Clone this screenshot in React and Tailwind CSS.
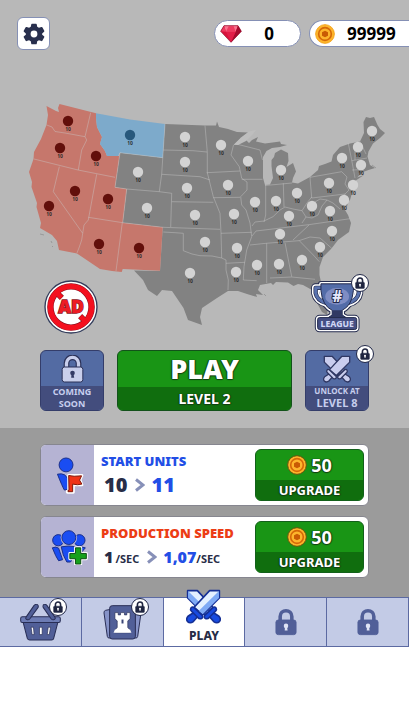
import React from "react";

const mainland =
  "M165 124L205 125.5L216 125.5L217 121.5L219 127L228 129L237 132L248 132.5L241 138L233.5 145L238 144.5L246 140L249 143L252 140L258 137L256 141.5L265 143.5L280 141.5L281 144L287 145L280 147L272 148L266.5 151L263 157L263 178L265 185L270 184.5L273 178L271.5 166L271.5 160L274 157L275 153L281 149.5L288 153L288.5 161L286.5 167L293 163L296 171.5L293 178L292 182.5L298 183.5L310 177L318 170L319 166L325 164L331.5 161.5L333 155L340 147L350 143.5L360 141.5L364 133L363.5 122L366 117L370 118L374 117L377.5 125L380 129L385 133L380 138L373 143.5L368.5 151.5L367.5 156.5L370 165L375 168L368.5 170L363 172L357 177.5L364 175L355 181L355 187L352 193L350 200L348 202L347 207L344 203L345 210L348 215L351 223L349 232L338 240L331.5 248.5L323 257L319.5 267L319.5 275L322 287L328 306L327 315L322 312L317 303L315 296L312 290L303 285L298 284L293.5 286L288 282.5L276 282L273 285L271 283L260 285L258 290L263 295L256 294L257 297L247 294L238 291L228 291L217 298L202 308L200 317L202 325L188 320L183.5 308L172 291L162 290L157 296L148 290L143 280L134 270.5L160 271L162.7 227.3L122.7 222.7L126.7 189L115 187.3L120 152.7L162.7 157.7Z";

const west =
  "M46.5 106L56 111L59 112L58 108L59.5 104L96 113.3L96 118L97 127L102 137L100 144L105 151L107 156L118.5 156L120 152.7L115 187.3L126.7 189L122.7 222.7L162.7 227.3L160 270.7L122.7 269L121.7 272L112 271L100 269L77 253.5L59 250L57 241L52 235L40 228L41 223L36.5 207L37 203L31.5 187L32 182L29 172L33.5 159L34 152L41 139L46.5 125L48 115Z";

const montana =
  "M96 113.3L130 119.5L165 124L162.7 157.7L120 152.7L118.5 156L107 156L105 151L100 144L102 137L97 127L96 118Z";

const borders =
  "M46.7 125L52 127L55 131.5L65 133L85 136.7M34 159L78 170L115 177.3M59.3 166.7L53.3 191.7L82.7 233.3L81.7 240L79.3 247L77 253M90.7 112.7L85 136.7L86.7 140L81.7 150L78.3 170M96.7 174.3L88.3 220L84 225L82.7 233.3M88.3 217.3L122.7 222.7M122.3 222.7L116 271M118.5 156L120 152.7L115 187.3L126.7 189L122.7 222.7L163 227.3L220 229.3M120 152.7L162.7 157.7M165 124L161.7 174L159.3 191.7M126.7 189L159.3 191.7L171.7 193.3L170.7 227M163.3 150L193 150.7L207 152M205 125.7L207.3 152V172.7L213.3 196.7L220 213.3L221 233L221.7 258M161.7 174.3L200 176.7L210 180M206.7 172.7L240 171M233.5 145L231 155L239.3 166.7L241.7 178.3L247 182V190L240.7 196.7L241.7 205L246 210L250 223L251.7 236.7L246.7 250L244 266.7L243.3 280L256.7 280.7M241.7 179.3H262.5M238.3 144.5L260 150L262.5 160M213.3 197.7L240 197.3M265.7 185V215L264 222M265 185.5L292 183M283.3 183.3L284 207M171.7 201.7L213.3 202.3M163.3 232L175 232.7L183.3 233.3V250.7L192 254L200 255.7L212 256L221.7 258L226 260V270L228.3 280L228 290M221 233.3L251.7 232.3M226 263.3L245 262.3M252 236L256 231L310 224.5L350 218.7M250 245L266 243.3L299 240.7L310 237L320 238L331.7 248.3M309 225L293 240M266.7 243.3V283M285 242.7L291.7 276.7M270 278L291.7 277L315 279.3M299.3 240.7L313.3 255L319.3 261.7M252 226L255 222L264 221L273 216.7L280 210L285 207L293 209L302 210.7L307 203L311.7 197M310 177.3L311.7 198L345 194L344 203M310 177.3L341.7 171.7L347 177L345 184L349 190L345 194M302 210.7L306 217L302 223M306 217L312 218L318 215L322 206L327 200L333 203L340 209M311.7 204L320 199L327 200M348.3 143.5L351.7 160L355 178M357 142L355 150V160M351.7 160.7L367 158M352 170L363 169.5V172M360 141.5L366 154";

const redCities = [[68,121],[60,148],[96,156],[49,206],[75,191],[108,199],[99,244],[139,248]];
const greyCities = [
  [138,172],[147,208],[185,137],[185,162],[187,188],[195,215],[205,242],[190,273],[221,145],
  [248,161],[228,185],[234,214],[237,248],[236,272],[255,202],[276,201],[257,265],[279,264],
  [281,170],[297,193],[289,216],[280,234],[302,260],[312,206],[330,211],[329,183],[332,231],
  [320,247],[344,200],[353,185],[342,158],[358,147],[361,165],[372,131],
];

function City({ at, color }) {
  return (
    <g>
      <circle cx={at[0]} cy={at[1]} r="5.2" fill={color} />
      <text x={at[0]} y={at[1] + 10} textAnchor="middle" className="text-[5px] font-bold" fill="#222" fillOpacity=".9">10</text>
    </g>
  );
}

function UsMap() {
  return (
    <svg viewBox="0 64 409 286" className="block w-full" role="img" aria-label="Territory map">
      <path d={mainland} fill="#828282" />
      <path d={west} fill="#c6776c" />
      <path d={montana} fill="#7daacb" />
      <path d="M249 131.5L256 130L253 134L249 138L246 141L238 145L234 144.5L241 137.5Z" fill="#bebebe" />
      <path d="M40 234l4 1M51 241l1 2M52 246l1 1M372 165l4 3M264 294l2 2" stroke="#999" fill="none" />
      <path d={borders} fill="none" stroke="#c9c9c9" strokeOpacity=".6" strokeWidth=".7" />
      {redCities.map((c) => <City key={c.join()} at={c} color="#620f0b" />)}
      <City at={[130, 135]} color="#28587c" />
      {greyCities.map((c) => <City key={c.join()} at={c} color="#d3d3d3" />)}
    </svg>
  );
}

function Gear() {
  return (
    <svg viewBox="0 0 24 24" className="size-[22px]" fill="#282f4d" fillRule="evenodd">
      <path d="M9 1.5Q9 .8 9.8.8H14.2Q15 .8 15 1.5L15.5 4.2L17.4 5.3L20 4.3Q20.7 4.1 21.1 4.7L23.2 8.4Q23.5 9.1 23 9.6L20.9 11.4V12.8L23 14.5Q23.5 15 23.2 15.6L21.1 19.3Q20.7 20 20 19.7L17.4 18.7L15.5 19.8L15 22.5Q14.9 23.2 14.2 23.2H9.8Q9.1 23.2 9 22.5L8.5 19.8L6.6 18.7L4 19.7Q3.3 20 2.9 19.3L.8 15.6Q.5 15 1 14.5L3.1 12.8V11.4L1 9.6Q.5 9.1.8 8.4L2.9 4.7Q3.3 4.1 4 4.3L6.6 5.3L8.5 4.2ZM12 8.3a3.7 3.7 0 1 0 0 7.4a3.7 3.7 0 0 0 0-7.4Z" />
    </svg>
  );
}

function Gem() {
  return (
    <svg viewBox="0 0 66 54" className="h-[18px] w-[22px]">
      <path d="M12 2H54L64 19L33 52L2 19Z" fill="#d8123c" />
      <path d="M12 2H54L47 20H18Z" fill="#f9738e" />
      <path d="M2 19L12 2L18 20ZM18 20L26 4H41L47 20Z" fill="#ee3a60" />
      <path d="M64 19L54 2L47 20L33 52Z" fill="#a50a2e" />
      <path d="M18 20H47L33 52Z" fill="#e21d48" />
      <path d="M12 2H54L64 19L33 52L2 19Z" fill="none" stroke="#8d0a2a" strokeWidth="2" />
    </svg>
  );
}

function Coin({ outline }) {
  return (
    <svg viewBox="0 0 60 60" className="size-5">
      <circle cx="30" cy="30" r="28" fill="#fdb52c" stroke={outline} strokeWidth="3" />
      <circle cx="30" cy="30" r="19" fill="#fdb52c" stroke="#d56808" strokeWidth="5" />
      <path d="M30 20L39 25V35L30 40L21 35V25Z" fill="#c95b04" />
    </svg>
  );
}

function LockGlyph({ className, body, hole, stroke }) {
  return (
    <svg viewBox="0 0 68 84" className={className}>
      <path d="M16 42V25a18 18 0 0 1 36 0V42" fill="none" stroke={stroke || body} strokeWidth={stroke ? 17 : 11} />
      {stroke && <path d="M16 42V25a18 18 0 0 1 36 0V42" fill="none" stroke={body} strokeWidth="10" />}
      <rect x="3" y="36" width="62" height="45" rx="7" fill={body} stroke={stroke || body} strokeWidth="3" />
      <circle cx="34" cy="54" r="7" fill={hole} />
      <path d="M31 56h6l2 12h-9Z" fill={hole} />
    </svg>
  );
}

function LockBadge({ className }) {
  return (
    <span className={`absolute flex size-[18px] items-center justify-center rounded-full border border-[#202747] bg-white ${className}`}>
      <LockGlyph className="h-3 w-[10px]" body="#1f2540" hole="#fff" />
    </span>
  );
}

function Sword({ blade, shade, grip, line }) {
  return (
    <g stroke={line} strokeWidth="4" strokeLinejoin="round">
      <path d="M58 4H82V22L41 63L20 45Z" fill={blade} />
      {shade !== blade && <path d="M81 5V22L41 62L31 54Z" fill={shade} stroke="none" />}
      <path d="M22 56L31 65L18 80Q10 86 4 80Q-1 74 5 67Z" fill={grip} />
      <path d="M12 47Q15 42 20 46L40 65Q43 71 37 73Q32 74 29 70L13 54Q10 51 12 47Z" fill={grip} />
    </g>
  );
}

function Swords({ className, ...colors }) {
  return (
    <svg viewBox="0 0 86 86" className={className}>
      <g transform="translate(86 0) scale(-1 1)"><Sword {...colors} /></g>
      <Sword {...colors} />
    </svg>
  );
}

const cup = "M30 14H128V34Q124 80 94 94V108L106 116H52L64 108V94Q34 80 30 34Z";
const handles = "M34 26H14V42Q18 64 46 72M124 26H144V42Q140 64 112 72";

function Trophy() {
  return (
    <svg viewBox="0 0 160 165" className="h-[55px] w-[53px]" strokeLinejoin="round">
      <g fill="#232a4d" stroke="#232a4d" strokeWidth="17">
        <path d={cup} />
        <rect x="20" y="116" width="118" height="36" rx="6" />
        <path d={handles} fill="none" strokeWidth="27" />
      </g>
      <g fill="#fff" stroke="#fff" strokeWidth="11">
        <path d={cup} />
        <rect x="20" y="116" width="118" height="36" rx="6" />
        <path d={handles} fill="none" strokeWidth="22" />
      </g>
      <path d={handles} fill="none" stroke="#232a4d" strokeWidth="13" />
      <path d={handles} fill="none" stroke="#5972ad" strokeWidth="9" />
      <path d={cup} fill="#536ca8" stroke="#232a4d" strokeWidth="3" />
      <path d="M64 94H94V108L106 116H52L64 108Z" fill="#303963" />
      <ellipse cx="79" cy="52" rx="36" ry="25" fill="#7f8dc3" />
      <rect x="20" y="116" width="118" height="36" rx="6" fill="#454f84" stroke="#232a4d" strokeWidth="3" />
      <text x="79" y="68" textAnchor="middle" className="text-[46px] font-extrabold" fill="#e4e7fa" stroke="#232a4d" strokeWidth="6" paintOrder="stroke">#</text>
      <text x="79" y="144" textAnchor="middle" className="text-[26px] font-extrabold" fill="#cfd6f4">LEAGUE</text>
    </svg>
  );
}

function NoAds() {
  return (
    <svg viewBox="0 0 160 160" className="size-[54px]">
      <circle cx="80" cy="80" r="77" fill="#fff" stroke="#333d5c" strokeWidth="4" />
      <circle cx="80" cy="80" r="61" fill="none" stroke="#8c1220" strokeWidth="19" />
      <path d="M39 39L53 53M107 107L121 121" stroke="#8c1220" strokeWidth="17" />
      <circle cx="80" cy="80" r="61" fill="none" stroke="#f4101f" strokeWidth="16" />
      <path d="M38 38L52 52M108 108L122 122" stroke="#f4101f" strokeWidth="14" />
      <text x="80" y="98" textAnchor="middle" className="text-[52px] font-black" fill="#ee1c24" stroke="#8c1220" strokeWidth="4" paintOrder="stroke">AD</text>
    </svg>
  );
}

function UnitIcon() {
  return (
    <svg viewBox="0 0 84 112" className="ml-1 h-[37px] w-7" strokeLinejoin="round">
      <g fill="#1a4df2" stroke="#1a2f8a" strokeWidth="3">
        <circle cx="30" cy="24" r="21" />
        <path d="M4 52Q17 49 26 54L36 66V98L25 100Q19 90 4 52Z" />
      </g>
      <path d="M38 56L78 56L72 69L78 84H52V107H34V104H38Z" fill="#fff" stroke="#fff" strokeWidth="9" />
      <path d="M38 56Q52 60 77 57L71 70L78 82Q65 86 50 82V105H36V101H39Z" fill="#ef3317" stroke="#7d1709" strokeWidth="3" />
    </svg>
  );
}

function CrowdIcon() {
  return (
    <svg viewBox="0 0 110 106" className="ml-1 h-[35px] w-[37px]" strokeLinejoin="round">
      <g fill="#1a4df2" stroke="#1a2f8a" strokeWidth="3">
        <circle cx="21" cy="31" r="17" />
        <circle cx="85" cy="31" r="17" />
        <path d="M3 54Q14 49 22 55L34 90L22 93Q14 82 3 54ZM103 54Q92 49 84 55L72 90Z" />
        <circle cx="53" cy="23" r="25" fill="#b5b3d3" stroke="none" />
        <circle cx="53" cy="23" r="21" />
        <path d="M30 51Q53 46 75 51Q70 82 58 97H47Q34 77 30 51Z" />
      </g>
      <path d="M73 54H89V71H106V87H89V103H73V87H56V71H73Z" fill="#fff" stroke="#fff" strokeWidth="9" />
      <path d="M73 54H89V71H106V87H89V103H73V87H56V71H73Z" fill="#16a01c" stroke="#0c4f13" strokeWidth="3" />
    </svg>
  );
}

function Basket() {
  return (
    <svg viewBox="0 0 122 110" className="h-[37px] w-[41px]" fill="#515f98" stroke="#282e55" strokeWidth="3" strokeLinejoin="round">
      <path d="M9 53H113L100 103Q99 107 94 107H29Q24 107 22 103Z" />
      <rect x="2" y="38" width="118" height="17" rx="5" fill="#6d7cb4" />
      <path d="M18 39Q15 45 22 47Q26 48 30 43L54 10Q56 3 50 1Q46 0 42 4ZM104 39Q107 45 100 47Q96 48 92 43L69 10Q67 3 72 1Q77 0 80 4Z" />
      <path d="M33 69h7l2 22h-6ZM58 69h8v22h-8ZM84 69h7l-4 22h-6Z" fill="#fff" strokeWidth="2" />
    </svg>
  );
}

function CardDeck() {
  return (
    <svg viewBox="0 0 118 106" className="h-[35px] w-[39px]" stroke="#282e55" strokeWidth="3" strokeLinejoin="round">
      <path d="M30 12L8 16Q2 18 3 24L13 95Q14 101 20 100L40 97Z" fill="#8693c8" />
      <path d="M88 12L110 16Q116 18 115 24L105 95Q104 101 98 100L78 97Z" fill="#8693c8" />
      <rect x="20" y="2" width="78" height="101" rx="8" fill="#515f98" />
      <path d="M36 23H46V30H53V23H65V30H72V23H82V42L75 48V68L82 76V84H36V76L43 68V48L36 42Z" fill="#fff" strokeWidth="2" />
      <path d="M36 74H82L86 84H32Z" fill="#fff" stroke="none" />
      <path d="M59 44V56" stroke="#3a4576" strokeWidth="6" />
    </svg>
  );
}

const outlined = "[text-shadow:0_1px_1px_#123d12,1px_0_1px_#123d12,-1px_0_1px_#123d12]";

function SideTile({ children, label }) {
  return (
    <button className="relative flex w-16 flex-col rounded-md border border-[#343d6a] bg-[#536ba3]">
      <span className="flex h-[35px] w-full items-center justify-center">{children}</span>
      <span className="flex h-6 w-full flex-col items-center justify-center rounded-b-[5px] bg-[#434d7d] text-[#c6cdee]">{label}</span>
    </button>
  );
}

function UpgradeCard({ icon, title, titleColor, children }) {
  return (
    <article className="flex h-[62px] overflow-hidden rounded-md border border-[#86868f] bg-white">
      <div className="flex w-[53px] shrink-0 items-center justify-center bg-[#b5b3d3]">{icon}</div>
      <div className="flex min-w-0 flex-1 flex-col pt-2 pl-[7px]">
        <h2 className={`text-[13px] leading-4 font-black whitespace-nowrap ${titleColor}`}>{title}</h2>
        <p className="flex h-8 items-center gap-1 pl-[3px] whitespace-nowrap text-[#272d47]">{children}</p>
      </div>
      <button className="my-1 mr-1 flex w-[109px] shrink-0 flex-col rounded-md border border-[#12601a] bg-[#199515] font-bold text-white">
        <span className={`flex h-[30px] w-full items-center justify-center gap-1 text-lg leading-6 ${outlined}`}>
          <Coin outline="#67530c" />50
        </span>
        <span className={`flex w-full flex-1 items-center justify-center rounded-b-[5px] bg-[#106e0e] text-[13px] leading-4 ${outlined}`}>UPGRADE</span>
      </button>
    </article>
  );
}

function Chevron() {
  return (
    <svg viewBox="0 0 10 14" className="mr-[2px] ml-1 h-[14px] w-[10px]" fill="none" stroke="#8790b8" strokeWidth="3">
      <path d="M1 1.5L8 7L1 12.5" />
    </svg>
  );
}

const tab = "relative flex h-[50px] flex-1 items-center justify-center border-y border-r border-[#5c6aa2] bg-[#c3cbe6]";

export default function App() {
  return (
    <div className="min-h-screen bg-white font-['Noto_Sans',sans-serif]">
      <main>
        <section className="bg-[#b8b8b8] pb-[17px]">
          <header className="flex h-16 items-start pt-[17px] pl-[17px] text-[17px] font-bold text-black">
            <button aria-label="Settings" className="flex size-[33px] items-center justify-center rounded-md border border-[#8590b5] bg-white"><Gear /></button>
            <div className="mt-[3px] ml-auto flex h-[27px] w-[87px] items-center rounded-full border border-[#8590b5] bg-white pl-[5px]">
              <Gem /><span className="flex-1 pr-1 text-center">0</span>
            </div>
            <div className="mt-[3px] ml-2 flex h-[27px] w-[100px] items-center gap-3 rounded-l-full border border-r-0 border-[#8590b5] bg-white pl-[5px]">
              <Coin outline="#f5a51c" /><span>99999</span>
            </div>
          </header>
          <div className="relative">
            <UsMap />
            <button aria-label="Remove ads" className="absolute bottom-4 left-11"><NoAds /></button>
            <button className="absolute right-[45px] bottom-4" aria-label="League">
              <Trophy />
              <LockBadge className="-top-[5px] -right-[5px]" />
            </button>
          </div>
          <div className="flex h-[61px] items-stretch gap-[13px] px-10 font-bold">
            <SideTile label={<span className="text-[9px] leading-3">COMING<br />SOON</span>}>
              <LockGlyph className="h-7 w-[23px]" body="#c9cfec" hole="#343b66" stroke="#2b3158" />
            </SideTile>
            <button className={`flex flex-1 flex-col rounded-md border border-[#12521a] bg-[#199515] text-white ${outlined}`}>
              <span className="flex h-9 w-full items-center justify-center text-[27px] leading-9 font-black">PLAY</span>
              <span className="flex w-full flex-1 items-center justify-center rounded-b-[5px] bg-[#106e0e] text-sm leading-5">LEVEL 2</span>
            </button>
            <SideTile label={<><span className="text-[8px] leading-[10px]">UNLOCK AT</span><span className="text-[11px] leading-[14px]">LEVEL 8</span></>}>
              <Swords className="size-7" blade="#c9cdee" shade="#c9cdee" grip="#c9cdee" line="#2f3763" />
              <LockBadge className="-top-[6px] -right-[6px]" />
            </SideTile>
          </div>
        </section>
        <section className="flex flex-col gap-[10px] bg-[#9b9b9b] px-10 pt-4 pb-[19px]">
          <UpgradeCard icon={<UnitIcon />} title="START UNITS" titleColor="text-[#224ee6]">
            <span className="text-xl font-black">10</span><Chevron /><span className="text-xl font-black text-[#224ee6]">11</span>
          </UpgradeCard>
          <UpgradeCard icon={<CrowdIcon />} title="PRODUCTION SPEED" titleColor="text-[#ec3d15]">
            <span className="text-base font-black">1<span className="ml-[2px] text-[11px] font-bold">/SEC</span></span><Chevron />
            <span className="text-base font-black text-[#224ee6]">1,07<span className="text-[11px] font-bold text-[#272d47]">/SEC</span></span>
          </UpgradeCard>
        </section>
      </main>
      <nav className="flex">
        <button aria-label="Shop" className={tab}><Basket /><LockBadge className="top-0 right-[14px]" /></button>
        <button aria-label="Cards" className={tab}><CardDeck /><LockBadge className="top-0 right-[14px]" /></button>
        <button aria-current="page" className="relative flex h-[50px] flex-1 items-end justify-center border-y border-r border-[#5c6aa2] bg-white">
          <Swords className="absolute -top-[9px] size-[35px]" blade="#e4f0ff" shade="#7faaf5" grip="#184be0" line="#152f94" />
          <span className="pb-[2px] text-xs leading-4 font-extrabold text-[#272d47]">PLAY</span>
        </button>
        <button aria-label="Locked" className={tab}><LockGlyph className="h-7 w-[22px]" body="#515f98" hole="#dfe4f5" /></button>
        <button aria-label="Locked" className={tab}><LockGlyph className="h-7 w-[22px]" body="#515f98" hole="#dfe4f5" /></button>
      </nav>
    </div>
  );
}
